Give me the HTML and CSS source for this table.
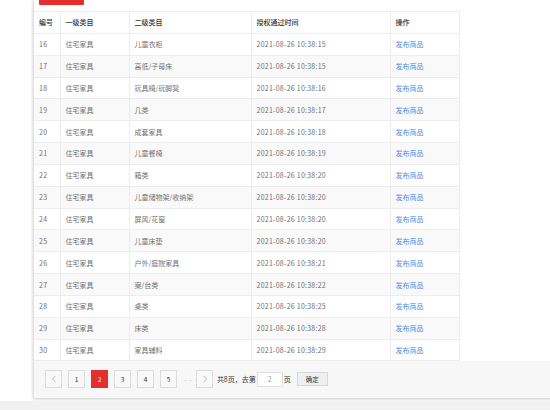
FILE: index.html
```html
<!DOCTYPE html>
<html lang="zh-CN">
<head>
<meta charset="utf-8">
<title>授权类目</title>
<link rel="stylesheet" href="styles.css">
</head>
<body>
<div class="page">
  <div class="card">
    <div class="toolbar"><span class="btn-red"></span></div>
    <table class="grid">
      <colgroup>
        <col class="c1"><col class="c2"><col class="c3"><col class="c4"><col class="c5">
      </colgroup>
      <thead>
        <tr><th>编号</th><th>一级类目</th><th>二级类目</th><th>授权通过时间</th><th>操作</th></tr>
      </thead>
      <tbody>
        <tr><td>16</td><td>住宅家具</td><td>儿童衣柜</td><td>2021-08-26 10:38:15</td><td><a class="link">发布商品</a></td></tr>
        <tr><td>17</td><td>住宅家具</td><td>高低/子母床</td><td>2021-08-26 10:38:15</td><td><a class="link">发布商品</a></td></tr>
        <tr><td>18</td><td>住宅家具</td><td>玩具椅/玩脚凳</td><td>2021-08-26 10:38:16</td><td><a class="link">发布商品</a></td></tr>
        <tr><td>19</td><td>住宅家具</td><td>几类</td><td>2021-08-26 10:38:17</td><td><a class="link">发布商品</a></td></tr>
        <tr><td>20</td><td>住宅家具</td><td>成套家具</td><td>2021-08-26 10:38:18</td><td><a class="link">发布商品</a></td></tr>
        <tr><td>21</td><td>住宅家具</td><td>儿童餐椅</td><td>2021-08-26 10:38:19</td><td><a class="link">发布商品</a></td></tr>
        <tr><td>22</td><td>住宅家具</td><td>箱类</td><td>2021-08-26 10:38:20</td><td><a class="link">发布商品</a></td></tr>
        <tr><td>23</td><td>住宅家具</td><td>儿童储物架/收纳架</td><td>2021-08-26 10:38:20</td><td><a class="link">发布商品</a></td></tr>
        <tr><td>24</td><td>住宅家具</td><td>屏风/花窗</td><td>2021-08-26 10:38:20</td><td><a class="link">发布商品</a></td></tr>
        <tr><td>25</td><td>住宅家具</td><td>儿童床垫</td><td>2021-08-26 10:38:20</td><td><a class="link">发布商品</a></td></tr>
        <tr><td>26</td><td>住宅家具</td><td>户外/庭院家具</td><td>2021-08-26 10:38:21</td><td><a class="link">发布商品</a></td></tr>
        <tr><td>27</td><td>住宅家具</td><td>案/台类</td><td>2021-08-26 10:38:22</td><td><a class="link">发布商品</a></td></tr>
        <tr><td>28</td><td>住宅家具</td><td>桌类</td><td>2021-08-26 10:38:25</td><td><a class="link">发布商品</a></td></tr>
        <tr><td>29</td><td>住宅家具</td><td>床类</td><td>2021-08-26 10:38:28</td><td><a class="link">发布商品</a></td></tr>
        <tr><td>30</td><td>住宅家具</td><td>家具辅料</td><td>2021-08-26 10:38:29</td><td><a class="link">发布商品</a></td></tr>
      </tbody>
    </table>
    <div class="pager">
      <div class="pages">
        <span class="pg arrow"><svg width="6" height="8" viewBox="0 0 6 8"><path d="M4.5 0.8 L1.5 4 L4.5 7.2" fill="none" stroke="#aaa" stroke-width="0.8"/></svg></span>
        <span class="pg">1</span>
        <span class="pg active">2</span>
        <span class="pg">3</span>
        <span class="pg">4</span>
        <span class="pg">5</span>
        <span class="dots">···</span>
        <span class="pg arrow"><svg width="6" height="8" viewBox="0 0 6 8"><path d="M1.5 0.8 L4.5 4 L1.5 7.2" fill="none" stroke="#aaa" stroke-width="0.8"/></svg></span>
      </div>
      <div class="jump">
        <span class="total">共8页，去第</span>
        <span class="input">2</span>
        <span class="unit">页</span>
        <span class="ok">确定</span>
      </div>
    </div>
  </div>
</div>
<div class="strip"></div>
</body>
</html>
```
FILE: styles.css
```css
html, body {
  margin: 0;
  padding: 0;
  background: #ffffff;
}
body {
  width: 550px;
  height: 410px;
  overflow: hidden;
  font-family: "Noto Sans CJK SC", "Noto Sans", sans-serif;
  font-size: 7px;
  color: #666;
}
.page {
  height: 398px;
  padding-left: 33px;
}
.card {
  height: 398px;
  width: 540px;
  background: #fff;
  border-left: 1px solid #e2e2e2;
  box-shadow: 0 1px 3px rgba(0, 0, 0, 0.22);
  display: flex;
  flex-direction: column;
}
.toolbar {
  height: 11px;
  padding-left: 5px;
}
.btn-red {
  display: block;
  width: 45px;
  height: 5px;
  background: #e3302f;
  border-radius: 0 0 1px 1px;
}
.grid {
  width: 425px;
  border-collapse: collapse;
  table-layout: fixed;
}
.c1 { width: 26px; }
.c2 { width: 69px; }
.c3 { width: 122px; }
.c4 { width: 139px; }
.c5 { width: 69px; }
.grid th, .grid td {
  border: 1px solid #ededed;
  padding: 0 0 0 5px;
  text-align: left;
  white-space: nowrap;
  line-height: 10px;
}
.grid tr > :first-child { border-left: none; }
.grid th {
  height: 21px;
  color: #333;
  font-weight: 500;
  background: #fff;
}
.grid td {
  height: 20.85px;
  color: #707070;
}
.grid td:nth-child(4),
.grid td:first-child {
  letter-spacing: 0.25px;
}
.grid tbody tr:nth-child(even) td {
  background: #f9f9f9;
}
.link {
  color: #4a90e2;
}
.pager {
  height: 37px;
  background: #f7f7f7;
  display: flex;
  align-items: flex-start;
  padding: 9px 0 0 11px;
  box-sizing: border-box;
}
.pages {
  display: flex;
  gap: 5.7px;
  align-items: center;
}
.pg {
  width: 17.3px;
  height: 17.5px;
  box-sizing: border-box;
  border: 1px solid #dcdcdc;
  background: #f9f9f9;
  color: #333;
  display: flex;
  align-items: center;
  justify-content: center;
  font-size: 6.5px;
}
.pg.active {
  background: #e3302f;
  border-color: #e3302f;
  color: #fff;
}
.dots {
  width: 7.6px;
  color: #c8c8c8;
  font-size: 5px;
  letter-spacing: 0.3px;
  text-align: center;
  white-space: nowrap;
}
.jump {
  display: flex;
  align-items: center;
  height: 17.5px;
  margin-left: 3.4px;
  color: #333;
}
.input {
  width: 26px;
  height: 15px;
  box-sizing: border-box;
  border: 1px solid #e0e0e0;
  background: #fff;
  color: #999;
  display: flex;
  align-items: center;
  justify-content: center;
  margin-left: 1px;
}
.unit {
  margin-left: 1px;
}
.ok {
  width: 31px;
  height: 14px;
  box-sizing: border-box;
  border: 1px solid #d8d8d8;
  background: #efefef;
  color: #333;
  display: flex;
  align-items: center;
  justify-content: center;
  margin-left: 6px;
  font-size: 6.5px;
}
.strip {
  margin-top: 3px;
  height: 9px;
  background: #f1f1f1;
}
```
